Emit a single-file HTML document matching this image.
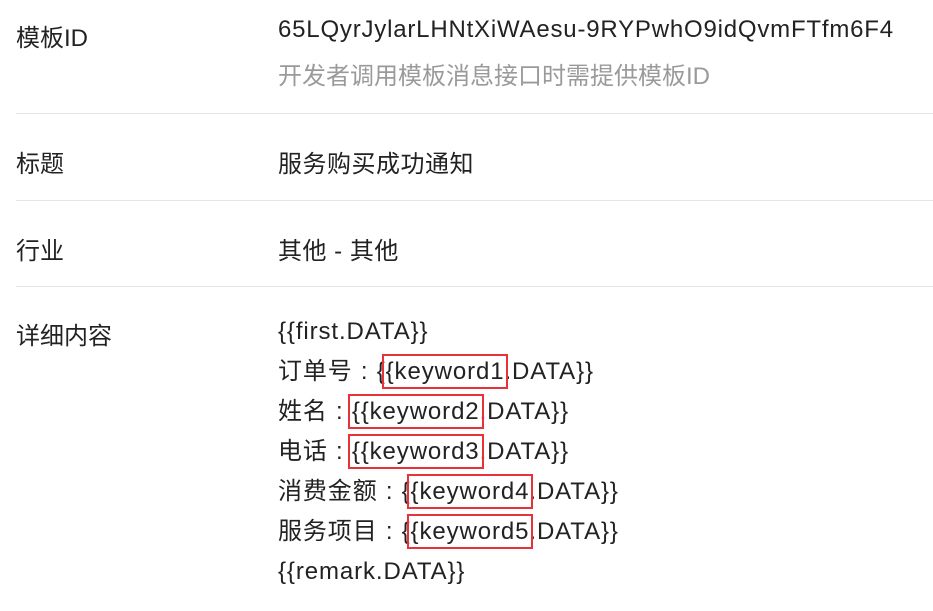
<!DOCTYPE html>
<html><head><meta charset="utf-8"><style>
body{margin:0;width:933px;height:611px;background:#fff;font-family:"Liberation Sans","Noto Sans CJK SC",sans-serif;font-size:24px;color:#222;position:relative;overflow:hidden}
.l{position:absolute;left:16px}
.v{position:absolute;left:278px;white-space:nowrap;letter-spacing:0.8px}
.hr{position:absolute;left:16px;right:0;height:1px;background:#e5e5e5}
.g{color:#9a9a9a;letter-spacing:0}
.c{display:inline-block;width:24px;text-align:center}
.k{outline:2px solid #e8323a;outline-offset:2px}
</style></head><body>
<div class="l" style="top:18px">模板ID</div>
<div class="v" style="top:16px">65LQyrJylarLHNtXiWAesu-9RYPwhO9idQvmFTfm6F4</div>
<div class="v g" style="top:56px">开发者调用模板消息接口时需提供模板ID</div>
<div class="hr" style="top:113px"></div>
<div class="l" style="top:144px">标题</div>
<div class="v" style="top:144px;letter-spacing:0.5px">服务购买成功通知</div>
<div class="hr" style="top:200px"></div>
<div class="l" style="top:231px">行业</div>
<div class="v" style="top:231px;letter-spacing:0.5px">其他 - 其他</div>
<div class="hr" style="top:286px"></div>
<div class="l" style="top:316px">详细内容</div>
<div class="v" style="top:312px;line-height:40px;letter-spacing:0.9px">{{first.DATA}}<br>订单号<span class="c">:</span>{<span class="k">{keyword1</span>.DATA}}<br>姓名<span class="c">:</span><span class="k">{{keyword2</span>.DATA}}<br>电话<span class="c">:</span><span class="k">{{keyword3</span>.DATA}}<br>消费金额<span class="c">:</span>{<span class="k">{keyword4</span>.DATA}}<br>服务项目<span class="c">:</span>{<span class="k">{keyword5</span>.DATA}}<br>{{remark.DATA}}</div>
</body></html>
